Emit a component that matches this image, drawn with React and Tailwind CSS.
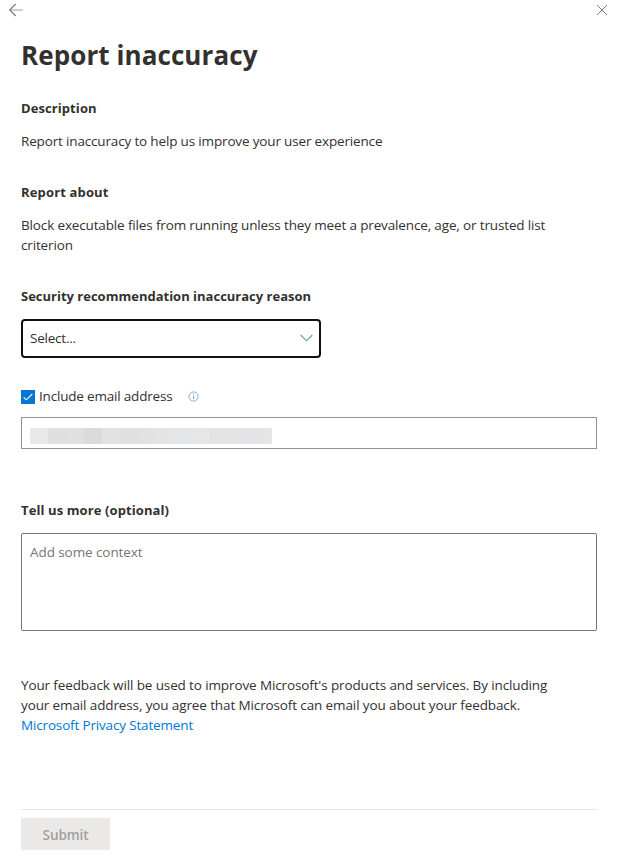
const MOSAIC = [
  "bg-[#e9e9e9]", "bg-[#dfdfdf]", "bg-[#e0e0e0]", "bg-[#dadada]", "bg-[#e2e2e2]", "bg-[#e1dfe0]", "bg-[#e1e3e2]",
  "bg-[#e4e5e2]", "bg-[#e4e5e9]", "bg-[#e6e7e6]", "bg-[#e3e3e3]", "bg-[#e4e4e4]", "bg-[#e3e4e8]",
];

function Label({ children, className = "" }) {
  return <h2 className={"h-5 whitespace-nowrap text-[13px] font-bold leading-5 text-[#323130] " + className}>{children}</h2>;
}

export default function App() {
  return (
    <main className="h-[864px] w-[623px] overflow-hidden bg-white font-['Open_Sans','Noto_Sans',sans-serif] text-[13.5px] leading-5 text-[#323130]">
      <header className="flex h-5 items-start justify-between pl-2 pr-[15px]">
        <button aria-label="Back" className="pt-[3px]">
          <svg width="16" height="14" viewBox="0 0 16 14" fill="none">
            <path d="M2 7H15" stroke="#cfcdcd" strokeWidth="2" />
            <path d="M7.7 1L1.7 7L7.7 13" stroke="#777" strokeWidth="1.1" />
          </svg>
        </button>
        <button aria-label="Close" className="pt-1">
          <svg width="12" height="12" viewBox="0 0 12 12" fill="none" stroke="#7c7c84">
            <path d="M1 1L11 11M11 1L1 11" />
          </svg>
        </button>
      </header>
      <div className="flex w-[597px] flex-col pl-[21px]">
        <h1 className="mt-[17px] h-9 whitespace-nowrap text-[26px] font-bold leading-9 tracking-[0.08px]">Report inaccuracy</h1>

        <Label className="mt-[25px] tracking-[0.08px]">Description</Label>
        <p className="mt-[13px] tracking-[-0.16px]">Report inaccuracy to help us improve your user experience</p>

        <Label className="mt-[31px] tracking-[0.15px]">Report about</Label>
        <p className="mt-[13px] tracking-[-0.145px]">
          Block executable files from running unless they meet a prevalence, age, or trusted list<br />criterion
        </p>

        <Label className="mt-[31px]">Security recommendation inaccuracy reason</Label>
        <button className="mt-[13px] flex h-[39px] w-[300px] items-center justify-between rounded-[4px] border-2 border-[#111] pb-0.5 pl-[7px] pr-[6px] tracking-[-0.22px]">
          <span>Select...</span>
          <svg width="13" height="8" viewBox="0 0 13 8" fill="none" stroke="#6797ab" strokeWidth="1.1">
            <path d="M.7 1L6.5 6.8L12.3 1" />
          </svg>
        </button>

        <div className="mt-[28px] flex h-5 items-center">
          <span className="mt-px flex h-[14px] w-[14px] items-center justify-center bg-[#0078d4]">
            <svg width="10" height="8" viewBox="0 0 10 8" fill="none" stroke="white" strokeWidth="1.1"><path d="M.7 4.3L3.3 6.8L9.3 1" /></svg>
          </span>
          <span className="ml-1 w-[149px] whitespace-nowrap tracking-[-0.19px]">Include email address</span>
          <svg width="11" height="11" viewBox="0 0 11 11" fill="none" stroke="#78a0d2">
            <circle cx="5.5" cy="5.5" r="4.6" strokeWidth=".9" />
            <path d="M5.5 4.7V8M5.5 2.8V3.8" />
          </svg>
        </div>
        <div className="mt-[11px] flex h-8 items-start border border-[#929090] pl-2 pt-[10px]">
          {MOSAIC.map((shade, i) => <span key={i} className={"h-4 w-[18px] " + shade} />)}
          <span className="h-4 w-2 bg-[#e6e6e7]" />
        </div>

        <Label className="mt-[51px] tracking-[0.1px]">Tell us more (optional)</Label>
        <div className="mt-[13px] h-[98px] rounded-[2px] border border-[#767676] px-2 pt-2 tracking-[-0.08px] text-[#757575]">Add some context</div>

        <p className="mt-[44px] whitespace-nowrap tracking-[-0.12px]">
          Your feedback will be used to improve Microsoft's products and services. By including<br />
          your email address, you agree that Microsoft can email you about your feedback.<br />
          <a className="tracking-[-0.16px] text-[#0078d4]">Microsoft Privacy Statement</a>
        </p>

        <footer className="mt-[74px] border-t border-[#e6e6e6] pt-2">
          <button className="flex h-8 w-[89px] items-center justify-center bg-[#ebe9e8] pt-0.5 font-semibold tracking-[-0.1px] text-[#a19f9d]">Submit</button>
        </footer>
      </div>
    </main>
  );
}
